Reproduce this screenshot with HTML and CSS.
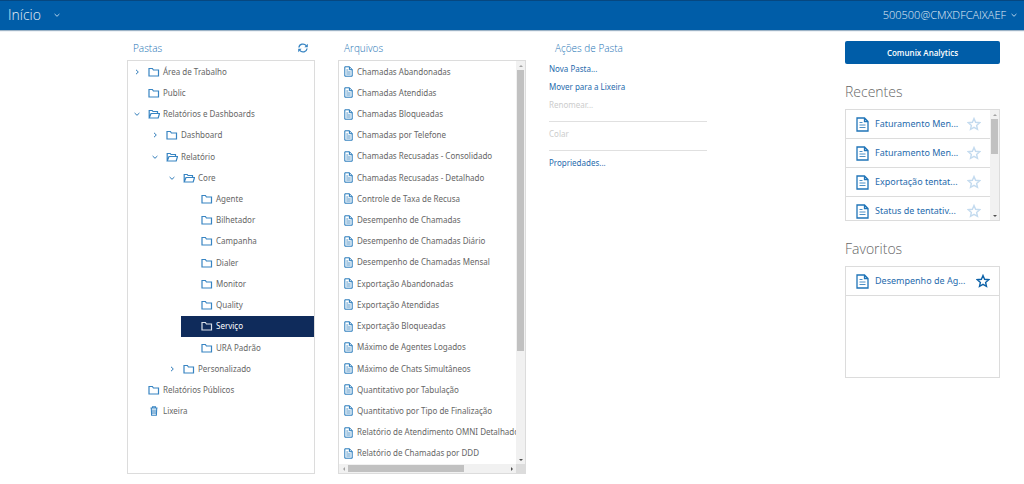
FILE: index.html
```html
<!DOCTYPE html>
<html lang="pt-BR">
<head>
<meta charset="utf-8">
<meta name="viewport" content="width=device-width, initial-scale=1">
<title>Início</title>
<link rel="stylesheet" href="styles.css">
</head>
<body>
<svg class="sprite" aria-hidden="true">
  <symbol id="folder" viewBox="0 0 12 10"><path d="M1 1.500h3.400l1 1.500H10.500v6H1z" fill="none" stroke="currentColor" stroke-width="1.200"/></symbol>
  <symbol id="folder-open" viewBox="0 0 12 10"><path d="M1.200 9V1.500h3l.8 1H9.500v1.500M1.200 9L3 4.500H11.500L10.200 9z" fill="none" stroke="currentColor" stroke-width="1.200"/></symbol>
  <symbol id="right" viewBox="0 0 6 6"><path d="M2 .8L4.300 3 2 5.200" fill="none" stroke="currentColor"/></symbol>
  <symbol id="down" viewBox="0 0 6 6"><path d="M.6 2L3 4.300 5.400 2" fill="none" stroke="currentColor"/></symbol>
  <symbol id="trash" viewBox="0 0 12 10"><path d="M2.500 2h7M4.500 1.800V.8h3v1M3.300 2.500l.3 6.700h4.800l.3-6.700M5 3.500v4.500M7 3.500v4.500" fill="none" stroke="currentColor" stroke-width="1.100"/></symbol>
  <symbol id="doc" viewBox="0 0 9 11"><path d="M.8.8h4.700l2.700 2.700v6.700H.8zM5.400.8v2.900h2.800" fill="none" stroke="currentColor"/><path d="M2.300 4h2M2.300 6h4.400M2.300 8h4.400" stroke="currentColor" stroke-width=".8"/></symbol>
  <symbol id="doc-large" viewBox="0 0 13 15"><path d="M1 1h7.500L12 4.500V14H1zM8.500 1v3.500H12" fill="none" stroke="currentColor" stroke-width="1.300"/><path d="M3.500 5.500h3M3.500 8h6M3.500 10.500h6" stroke="currentColor" stroke-width=".8"/></symbol>
  <symbol id="star" viewBox="0 0 14 14"><path d="M7 1.500l1.600 3.800 4.100.4-3.100 2.700.9 4L7 10.300l-3.500 2.100.9-4L1.300 5.700l4.100-.4z" fill="none" stroke="currentColor" stroke-width="1.400"/></symbol>
  <symbol id="refresh" viewBox="0 0 12 10"><path d="M1.900 4.500A4.100 3.900 0 0 1 9.200 2.600M10.100 5.500A4.100 3.900 0 0 1 2.800 7.400" fill="none" stroke="currentColor" stroke-width="1.300"/><path d="M10.800.8v3.400H7.400zM1.200 9.200V5.800h3.400z" fill="currentColor"/></symbol>
</svg>

<header class="topbar">
  <button class="menu menu-page" type="button">Início <svg class="chevron"><use href="#down"/></svg></button>
  <button class="menu menu-user" type="button">500500@CMXDFCAIXAEF <svg class="chevron"><use href="#down"/></svg></button>
</header>

<main class="layout">
  <section class="column">
    <div class="heading"><h2 class="title">Pastas</h2><button class="refresh" type="button" aria-label="Atualizar"><svg class="icon"><use href="#refresh"/></svg></button></div>
    <div class="panel">
      <ul class="tree" role="tree">
        <li class="node" role="treeitem"><svg class="chevron"><use href="#right"/></svg><svg class="icon"><use href="#folder"/></svg>Área de Trabalho</li>
        <li class="node leaf" role="treeitem"><svg class="icon"><use href="#folder"/></svg>Public</li>
        <li class="node" role="treeitem"><svg class="chevron"><use href="#down"/></svg><svg class="icon"><use href="#folder-open"/></svg>Relatórios e Dashboards</li>
        <li class="node level-2" role="treeitem"><svg class="chevron"><use href="#right"/></svg><svg class="icon"><use href="#folder"/></svg>Dashboard</li>
        <li class="node level-2" role="treeitem"><svg class="chevron"><use href="#down"/></svg><svg class="icon"><use href="#folder-open"/></svg>Relatório</li>
        <li class="node level-3" role="treeitem"><svg class="chevron"><use href="#down"/></svg><svg class="icon"><use href="#folder-open"/></svg>Core</li>
        <li class="node level-4 leaf" role="treeitem"><svg class="icon"><use href="#folder"/></svg>Agente</li>
        <li class="node level-4 leaf" role="treeitem"><svg class="icon"><use href="#folder"/></svg>Bilhetador</li>
        <li class="node level-4 leaf" role="treeitem"><svg class="icon"><use href="#folder"/></svg>Campanha</li>
        <li class="node level-4 leaf" role="treeitem"><svg class="icon"><use href="#folder"/></svg>Dialer</li>
        <li class="node level-4 leaf" role="treeitem"><svg class="icon"><use href="#folder"/></svg>Monitor</li>
        <li class="node level-4 leaf" role="treeitem"><svg class="icon"><use href="#folder"/></svg>Quality</li>
        <li class="node level-4 leaf selected" role="treeitem" aria-selected="true"><svg class="icon"><use href="#folder"/></svg>Serviço</li>
        <li class="node level-4 leaf" role="treeitem"><svg class="icon"><use href="#folder"/></svg>URA Padrão</li>
        <li class="node level-3" role="treeitem"><svg class="chevron"><use href="#right"/></svg><svg class="icon"><use href="#folder"/></svg>Personalizado</li>
        <li class="node leaf" role="treeitem"><svg class="icon"><use href="#folder"/></svg>Relatórios Públicos</li>
        <li class="node leaf" role="treeitem"><svg class="icon"><use href="#trash"/></svg>Lixeira</li>
      </ul>
    </div>
  </section>

  <section class="column">
    <div class="heading"><h2 class="title">Arquivos</h2></div>
    <div class="panel scroll-panel">
      <ul class="files">
        <li class="file"><svg class="doc"><use href="#doc"/></svg>Chamadas Abandonadas</li>
        <li class="file"><svg class="doc"><use href="#doc"/></svg>Chamadas Atendidas</li>
        <li class="file"><svg class="doc"><use href="#doc"/></svg>Chamadas Bloqueadas</li>
        <li class="file"><svg class="doc"><use href="#doc"/></svg>Chamadas por Telefone</li>
        <li class="file"><svg class="doc"><use href="#doc"/></svg>Chamadas Recusadas - Consolidado</li>
        <li class="file"><svg class="doc"><use href="#doc"/></svg>Chamadas Recusadas - Detalhado</li>
        <li class="file"><svg class="doc"><use href="#doc"/></svg>Controle de Taxa de Recusa</li>
        <li class="file"><svg class="doc"><use href="#doc"/></svg>Desempenho de Chamadas</li>
        <li class="file"><svg class="doc"><use href="#doc"/></svg>Desempenho de Chamadas Diário</li>
        <li class="file"><svg class="doc"><use href="#doc"/></svg>Desempenho de Chamadas Mensal</li>
        <li class="file"><svg class="doc"><use href="#doc"/></svg>Exportação Abandonadas</li>
        <li class="file"><svg class="doc"><use href="#doc"/></svg>Exportação Atendidas</li>
        <li class="file"><svg class="doc"><use href="#doc"/></svg>Exportação Bloqueadas</li>
        <li class="file"><svg class="doc"><use href="#doc"/></svg>Máximo de Agentes Logados</li>
        <li class="file"><svg class="doc"><use href="#doc"/></svg>Máximo de Chats Simultâneos</li>
        <li class="file"><svg class="doc"><use href="#doc"/></svg>Quantitativo por Tabulação</li>
        <li class="file"><svg class="doc"><use href="#doc"/></svg>Quantitativo por Tipo de Finalização</li>
        <li class="file"><svg class="doc"><use href="#doc"/></svg>Relatório de Atendimento OMNI Detalhado</li>
        <li class="file"><svg class="doc"><use href="#doc"/></svg>Relatório de Chamadas por DDD</li>
      </ul>
      <div class="bar bar-y" aria-hidden="true"><span class="arrow up off"></span><span class="track"><span class="thumb"></span></span><span class="arrow dn"></span></div>
      <div class="bar bar-x" aria-hidden="true"><span class="arrow lt off"></span><span class="track"><span class="thumb"></span></span><span class="arrow rt"></span></div>
      <div class="corner"></div>
    </div>
  </section>

  <section class="column">
    <div class="heading"><h2 class="title">Ações de Pasta</h2></div>
    <div class="actions">
      <button class="action" type="button">Nova Pasta...</button>
      <button class="action" type="button">Mover para a Lixeira</button>
      <button class="action" type="button" disabled>Renomear...</button>
      <hr class="rule">
      <button class="action" type="button" disabled>Colar</button>
      <hr class="rule">
      <button class="action" type="button">Propriedades...</button>
    </div>
  </section>

  <aside class="side">
    <button class="primary" type="button">Comunix Analytics</button>
    <h2 class="side-title">Recentes</h2>
    <div class="card card-scroll">
      <ul class="reports">
        <li class="report"><svg class="doc-large"><use href="#doc-large"/></svg><a class="link" href="#">Faturamento Men...</a><button class="star" type="button" aria-label="Favoritar"><svg><use href="#star"/></svg></button></li>
        <li class="report"><svg class="doc-large"><use href="#doc-large"/></svg><a class="link" href="#">Faturamento Men...</a><button class="star" type="button" aria-label="Favoritar"><svg><use href="#star"/></svg></button></li>
        <li class="report"><svg class="doc-large"><use href="#doc-large"/></svg><a class="link" href="#">Exportação tentat...</a><button class="star" type="button" aria-label="Favoritar"><svg><use href="#star"/></svg></button></li>
        <li class="report"><svg class="doc-large"><use href="#doc-large"/></svg><a class="link" href="#">Status de tentativ...</a><button class="star" type="button" aria-label="Favoritar"><svg><use href="#star"/></svg></button></li>
      </ul>
      <div class="bar bar-y" aria-hidden="true"><span class="arrow up off"></span><span class="track"><span class="thumb short"></span></span><span class="arrow dn"></span></div>
    </div>
    <h2 class="side-title">Favoritos</h2>
    <div class="card">
      <ul class="reports">
        <li class="report"><svg class="doc-large"><use href="#doc-large"/></svg><a class="link" href="#">Desempenho de Ag...</a><button class="star on" type="button" aria-label="Remover dos favoritos"><svg><use href="#star"/></svg></button></li>
      </ul>
    </div>
  </aside>
</main>
</body>
</html>
```
FILE: styles.css
```css
* { box-sizing: border-box; }
body {
  margin: 0;
  min-height: 100vh;
  display: flex;
  flex-direction: column;
  background: #fff;
  color: #666;
  font: 8px/12px "Noto Sans", "Open Sans", sans-serif;
}
button { margin: 0; padding: 0; border: 0; background: none; color: inherit; font: inherit; cursor: pointer; }
ul { margin: 0; padding: 0; list-style: none; }
h2 { margin: 0; font-family: "Open Sans", sans-serif; font-weight: 300; }
svg { display: block; flex: none; }
.sprite { display: none; }

.topbar {
  display: flex;
  justify-content: space-between;
  align-items: center;
  height: 30px;
  padding: 0 7px 2px 8px;
  background: #005da8;
  border-top: 1px solid #064780;
  box-shadow: 0 1px 1px #9db3c6;
  color: #e4eef7;
}
.menu { display: flex; align-items: center; font-family: "Open Sans", sans-serif; font-weight: 300; line-height: 20px; }
.menu-page { gap: 13px; font-size: 14px; }
.menu-user { gap: 5px; font-size: 11px; }
.chevron { width: 6px; height: 6px; color: #2e7ab8; }
.topbar .chevron { color: #b5d2ea; }

.layout {
  flex: 1;
  display: grid;
  grid-template-columns: minmax(0, 188fr) minmax(0, 188fr) minmax(0, 273fr) minmax(0, 155fr);
  column-gap: 23px;
  padding: 8px 24px 10px 127px;
}
.column { display: flex; flex-direction: column; }
.heading {
  display: flex;
  justify-content: space-between;
  align-items: center;
  height: 20px;
  margin-bottom: 2px;
  padding: 0 6px;
  color: #2474b5;
}
.title { font-size: 10px; line-height: 14px; }
.panel { flex: 1; border: 1px solid #dcdcdc; }
.icon { width: 12px; height: 10px; color: #3784c2; }

.tree { display: grid; grid-auto-rows: 1fr; height: 361px; }
.node { display: flex; align-items: center; padding-left: 6px; white-space: nowrap; }
.node .chevron { margin-right: 8px; }
.node .icon { margin-right: 3px; }
.leaf { padding-left: 20px; }
.level-2 { margin-left: 18px; }
.level-3 { margin-left: 35px; }
.level-4 { margin-left: 53px; }
.selected { background: #0f2b5b; color: #fff; }
.selected .icon { color: #d9e0ea; }

.scroll-panel {
  display: grid;
  grid-template: minmax(0, 1fr) 9px / minmax(0, 1fr) 9px;
}
.files { display: grid; grid-auto-rows: 1fr; overflow: hidden; }
.file { display: flex; align-items: center; gap: 4px; padding-left: 5px; white-space: nowrap; }
.doc { width: 9px; height: 11px; color: #2478ba; }

.bar { display: flex; background: #f1f1f1; }
.bar-y { flex-direction: column; }
.track { flex: 1; display: flex; flex-direction: inherit; }
.thumb { flex: 0 0 73%; background: #c1c1c1; }
.bar-y .thumb { margin: 0 1px; }
.bar-x .thumb { margin: 1px 0; }
.thumb.short { flex-basis: 38%; }
.corner { background: #dcdcdc; }
.arrow { width: 9px; height: 9px; display: grid; place-items: center; color: #505050; }
.off { color: #a3a3a3; }
.arrow::before { content: ""; border: 2px solid transparent; }
.up::before { border-top: 0; border-bottom-color: currentColor; }
.dn::before { border-bottom: 0; border-top-color: currentColor; }
.lt::before { border-left: 0; border-right-color: currentColor; }
.rt::before { border-right: 0; border-left-color: currentColor; }

.actions { display: flex; flex-direction: column; align-items: flex-start; width: 58%; }
.action { height: 18px; color: #1f6bad; }
.action:disabled { color: #ccc; }
.rule { width: 100%; margin: 7px 0 3px; border: 0; border-top: 1px solid #e0e0e0; }

.side { padding-top: 3px; }
.primary {
  display: block;
  width: 100%;
  height: 23px;
  border-radius: 2px;
  background: #005da8;
  color: #fff;
  font-family: "Open Sans", sans-serif;
  font-weight: 600;
}
.side-title { margin: 18px 0 7px; color: #666; font-size: 14px; line-height: 20px; }
.card { height: 112px; border: 1px solid #dcdcdc; overflow: hidden; }
.card-scroll { display: grid; grid-template: minmax(0, 1fr) / minmax(0, 1fr) 9px; }
.reports { overflow: hidden; }
.report {
  display: flex;
  align-items: center;
  height: 29px;
  padding: 0 9px 0 10px;
  border-bottom: 1px solid #dcdcdc;
}
.doc-large { width: 13px; height: 15px; color: #1f74b8; }
.link {
  flex: 1;
  min-width: 0;
  padding-left: 6px;
  color: #1f6bad;
  font-size: 9px;
  line-height: 16px;
  text-decoration: none;
  white-space: nowrap;
}
.star { color: #c4dbef; }
.star svg { width: 14px; height: 14px; }
.on { color: #0d62a8; }
```
